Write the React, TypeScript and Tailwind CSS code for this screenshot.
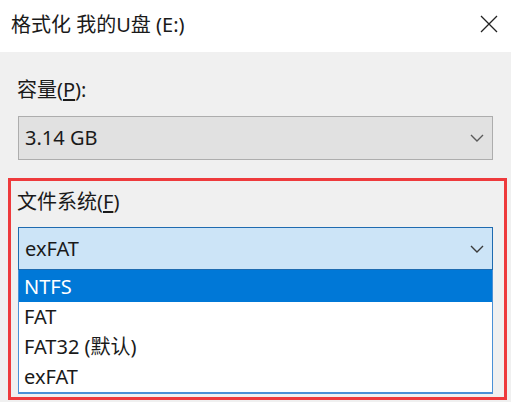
const FONT = "font-['Noto_Sans','Noto_Sans_CJK_SC',sans-serif]";

function Chevron({ color }: { color: string }) {
  return (
    <svg width="14" height="8" viewBox="0 0 14 8" fill="none">
      <path d="M1 1l6 6 6-6" stroke={color} strokeWidth="1.4" />
    </svg>
  );
}

const options = ["NTFS", "FAT", "FAT32 (默认)", "exFAT"];

export default function App() {
  return (
    <div className={`w-[511px] h-[402px] overflow-hidden bg-[#f0f0f0] text-[20px] text-[#1a1a1a] ${FONT}`}>
      {/* title bar */}
      <div className="h-[52px] bg-white flex items-center justify-between pl-[11px] pr-[13px]">
        <span className="leading-7 -mt-[2px]">格式化 我的U盘 (E:)</span>
        <svg width="18" height="18" viewBox="0 0 18 18" className="-mt-[4px]">
          <path d="M1 1l16 16M17 1L1 17" stroke="#222" strokeWidth="1.3" />
        </svg>
      </div>

      <div className="pt-[24px]">
        <div className="pl-[17px] leading-7">
          容量(<span className="underline underline-offset-2">P</span>):
        </div>
        <div className="mt-[12px] ml-[18px] w-[475px] h-[44px] bg-[#e1e1e1] border border-[#adadad] flex items-center justify-between pl-[6px] pr-[8px]">
          <span className="leading-7">3.14 GB</span>
          <Chevron color="#5a5a5a" />
        </div>

        <div className="mt-[18px] ml-[8px] w-[499px] h-[222px] border-[3px] border-[#ee3a3c]">
          <div className="pt-[7px] pl-[6px] leading-7">
            文件系统(<span className="underline underline-offset-2">F</span>)
          </div>
          <div className="mt-[11px] ml-[7px] w-[475px]">
            <div className="h-[43px] bg-[#cce4f7] border border-[#1e6bb0] flex items-center justify-between pl-[6px] pr-[8px]">
              <span className="leading-7">exFAT</span>
              <Chevron color="#3a3a3a" />
            </div>
            <div className="bg-white border border-t-0 border-[#4a90d6] border-b-2 pb-0">
              {options.map((o, i) => (
                <div
                  key={o}
                  className={
                    i === 0
                      ? "h-[32px] pt-[2px] pl-[5px] flex items-center bg-[#0078d7] text-white"
                      : "h-[30px] pl-[5px] flex items-center"
                  }
                >
                  <span className="leading-7">{o}</span>
                </div>
              ))}
            </div>
          </div>
        </div>
      </div>
    </div>
  );
}
